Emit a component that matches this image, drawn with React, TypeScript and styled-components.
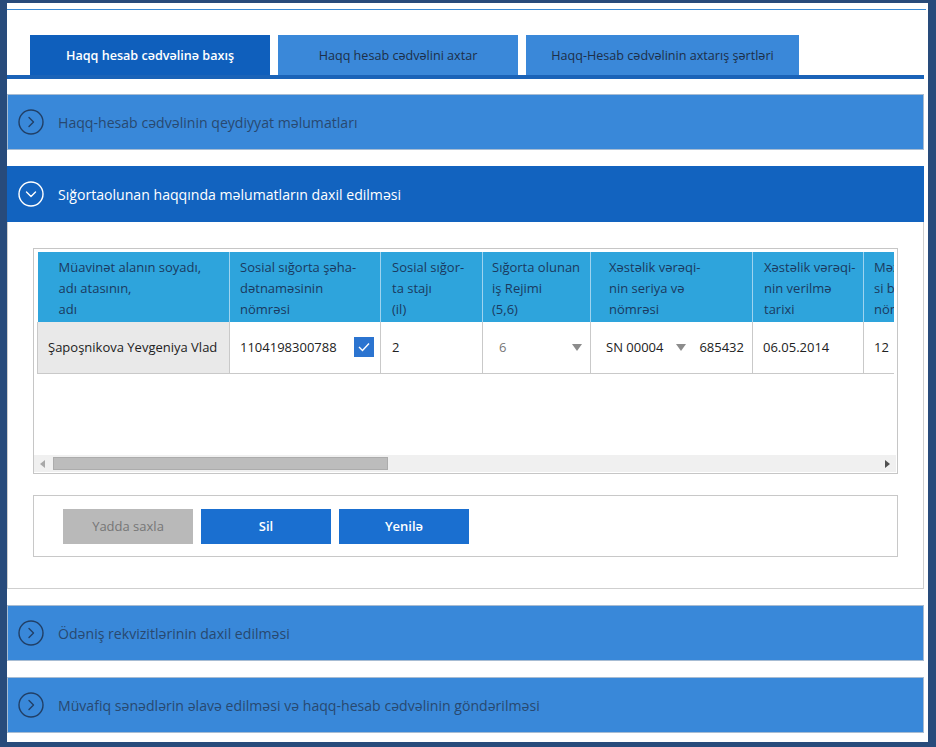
import React from "react";
import styled, { createGlobalStyle } from "styled-components";

const GlobalStyle = createGlobalStyle`
  html, body { margin: 0; padding: 0; background: #284b7b; }
  body { font-family: "Open Sans", "Noto Sans", "Liberation Sans", sans-serif; }
  * { box-sizing: border-box; }
`;

const Frame = styled.div`
  width: 936px;
  height: 747px;
  background: #ffffff;
  border-style: solid;
  border-color: #284b7b;
  border-width: 3px 8px 5px 7px;
  padding: 6px 4px 0 0;
  overflow: hidden;
`;

const TopRule = styled.div`
  height: 1px;
  background: #3a8ad4;
  margin: 0 -2px 25px -1px;
`;

const TabBar = styled.div`
  display: flex;
  gap: 8px;
  padding-left: 23px;
  border-bottom: 4px solid #1a63b8;
`;

const Tab = styled.div<{ $active?: boolean; $w: number }>`
  width: ${(p) => p.$w}px;
  height: 40px;
  display: flex;
  align-items: center;
  justify-content: center;
  font-size: 12.6px;
  font-weight: ${(p) => (p.$active ? 600 : 400)};
  color: ${(p) => (p.$active ? "#ffffff" : "#1d2f48")};
  background: ${(p) => (p.$active ? "#0f5fbc" : "#3a88d9")};
`;

const Sections = styled.div`
  display: flex;
  flex-direction: column;
  gap: 16px;
  padding-top: 15px;
`;

const Section = styled.section`
  display: flex;
  flex-direction: column;
`;

const SectionHeader = styled.div<{ $open?: boolean }>`
  height: 56px;
  display: flex;
  align-items: center;
  gap: 14px;
  padding-left: 10px;
  border: 1px solid ${(p) => (p.$open ? "#1263bf" : "#a7bcd3")};
  background: ${(p) => (p.$open ? "#1263bf" : "#3988d9")};
  color: ${(p) => (p.$open ? "#ffffff" : "#284870")};
  font-size: 14.1px;
`;

const ToggleIcon = styled.svg`
  flex: none;
  width: 26px;
  height: 26px;
`;

const Panel = styled.div`
  border: 1px solid #cfcfcf;
  border-top: none;
  padding: 26px 25px 31px 25px;
  display: flex;
  flex-direction: column;
  gap: 21px;
`;

const TableBox = styled.div`
  height: 226px;
  border: 1px solid #c6c6c6;
  padding: 3px 0 1px 0;
  display: flex;
  flex-direction: column;
`;

const Viewport = styled.div`
  flex: 1;
  margin: 0 3px;
  overflow: hidden;
`;

const Grid = styled.table`
  border-collapse: collapse;
  table-layout: fixed;
  width: 1000px;
  font-size: 13px;
`;

const HeadCell = styled.th<{ $pl: number }>`
  height: 70px;
  padding: 2px 4px 0 ${(p) => p.$pl}px;
  background: #2ea4dc;
  color: #1b3a60;
  font-weight: 400;
  text-align: left;
  vertical-align: middle;
  line-height: 21px;
  border-left: 1px solid #9ed3ef;
  white-space: nowrap;
  overflow: hidden;
  &:first-child { border-left: none; }
`;

const Cell = styled.td<{ $pl: number; $shade?: boolean; $muted?: boolean }>`
  height: 51px;
  padding: 0 8px 0 ${(p) => p.$pl}px;
  background: ${(p) => (p.$shade ? "#e9e9e9" : "#ffffff")};
  color: ${(p) => (p.$muted ? "#777777" : "#222222")};
  border: 1px solid #c9c9c9;
  border-top: none;
  white-space: nowrap;
  overflow: hidden;
`;

const CellRow = styled.div`
  display: flex;
  align-items: center;
  justify-content: space-between;
`;

const Check = styled.span`
  width: 20px;
  height: 20px;
  background: #2b74d0;
  display: inline-flex;
  align-items: center;
  justify-content: center;
  margin-right: -2px;
`;

const Caret = styled.svg`
  flex: none;
  width: 10px;
  height: 7px;
`;

const Scrollbar = styled.div`
  height: 17px;
  margin: 0 1px 0 0;
  background: #f0f0f0;
  display: flex;
  align-items: center;
`;

const ScrollArrow = styled.div`
  width: 17px;
  height: 17px;
  display: flex;
  align-items: center;
  justify-content: center;
  flex: none;
`;

const Thumb = styled.div<{ $w: number }>`
  width: ${(p) => p.$w}px;
  height: 13px;
  background: #bcbcbc;
  border: 1px solid #acacac;
  margin-left: 2px;
`;

const Spacer = styled.div`
  flex: 1;
`;

const ButtonBox = styled.div`
  height: 62px;
  border: 1px solid #c8c8c8;
  display: flex;
  align-items: center;
  gap: 8px;
  padding-left: 29px;
`;

const Button = styled.button<{ $variant: "disabled" | "primary" }>`
  width: 130px;
  height: 35px;
  border: none;
  font-family: inherit;
  font-size: 13px;
  font-weight: ${(p) => (p.$variant === "primary" ? 600 : 400)};
  background: ${(p) => (p.$variant === "primary" ? "#1a6fd0" : "#b9b9b9")};
  color: ${(p) => (p.$variant === "primary" ? "#ffffff" : "#767676")};
`;

const Chevron = ({ open }: { open?: boolean }) => (
  <ToggleIcon viewBox="0 0 26 26" fill="none" stroke={open ? "#ffffff" : "#213f66"} strokeWidth="1.4">
    <circle cx="13" cy="13" r="12" />
    {open ? (
      <path d="M8.5 11 L13 15.5 L17.5 11" strokeLinecap="round" strokeLinejoin="round" />
    ) : (
      <path d="M11 8.5 L15.5 13 L11 17.5" strokeLinecap="round" strokeLinejoin="round" />
    )}
  </ToggleIcon>
);

const DownCaret = () => (
  <Caret viewBox="0 0 10 7">
    <path d="M0 0 H10 L5 7 Z" fill="#8c8c8c" />
  </Caret>
);

const columns = [
  { w: 192, hp: 21, head: ["Müavinət alanın soyadı,", "adı atasının,", "adı"] },
  { w: 151, hp: 10, head: ["Sosial sığorta şəha-", "dətnaməsinin", "nömrəsi"] },
  { w: 102, hp: 11, head: ["Sosial sığor-", "ta stajı", "(il)"] },
  { w: 108, hp: 9, head: ["Sığorta olunan", "iş Rejimi", "(5,6)"] },
  { w: 162, hp: 18, head: ["Xəstəlik vərəqi-", "nin seriya və", "nömrəsi"] },
  { w: 111, hp: 11, head: ["Xəstəlik vərəqi-", "nin verilmə", "tarixi"] },
  { w: 174, hp: 10, head: ["Məzuniyyət vərəqə-", "si barədə əmrin", "nömrəsi"] },
];

const closedSections = {
  top: "Haqq-hesab cədvəlinin qeydiyyat məlumatları",
  pay: "Ödəniş rekvizitlərinin daxil edilməsi",
  docs: "Müvafiq sənədlərin əlavə edilməsi və haqq-hesab cədvəlinin göndərilməsi",
};

export default function App() {
  return (
    <>
      <GlobalStyle />
      <Frame>
        <TopRule />
        <TabBar>
          <Tab $active $w={240}>Haqq hesab cədvəlinə baxış</Tab>
          <Tab $w={240}>Haqq hesab cədvəlini axtar</Tab>
          <Tab $w={273}>Haqq-Hesab cədvəlinin axtarış şərtləri</Tab>
        </TabBar>
        <Sections>
          <Section>
            <SectionHeader>
              <Chevron />
              <span>{closedSections.top}</span>
            </SectionHeader>
          </Section>
          <Section>
            <SectionHeader $open>
              <Chevron open />
              <span>Sığortaolunan haqqında məlumatların daxil edilməsi</span>
            </SectionHeader>
            <Panel>
              <TableBox>
                <Viewport>
                  <Grid>
                    <colgroup>
                      {columns.map((c, i) => (
                        <col key={i} style={{ width: c.w }} />
                      ))}
                    </colgroup>
                    <thead>
                      <tr>
                        {columns.map((c, i) => (
                          <HeadCell key={i} $pl={c.hp}>
                            {c.head.map((l, j) => (
                              <React.Fragment key={j}>
                                {l}
                                {j < c.head.length - 1 && <br />}
                              </React.Fragment>
                            ))}
                          </HeadCell>
                        ))}
                      </tr>
                    </thead>
                    <tbody>
                      <tr>
                        <Cell $pl={10} $shade>Şapoşnikova Yevgeniya Vlad</Cell>
                        <Cell $pl={10}>
                          <CellRow>
                            <span>1104198300788</span>
                            <Check>
                              <svg width="12" height="10" viewBox="0 0 12 10" fill="none" stroke="#ffffff" strokeWidth="1.4">
                                <path d="M1 5 L4.5 8.5 L11 1.5" />
                              </svg>
                            </Check>
                          </CellRow>
                        </Cell>
                        <Cell $pl={11}>2</Cell>
                        <Cell $pl={16} $muted>
                          <CellRow>
                            <span>6</span>
                            <DownCaret />
                          </CellRow>
                        </Cell>
                        <Cell $pl={15}>
                          <CellRow>
                            <span>SN 00004</span>
                            <DownCaret />
                            <span>685432</span>
                          </CellRow>
                        </Cell>
                        <Cell $pl={10}>06.05.2014</Cell>
                        <Cell $pl={10}>12</Cell>
                      </tr>
                    </tbody>
                  </Grid>
                </Viewport>
                <Scrollbar>
                  <ScrollArrow>
                    <svg width="5" height="8" viewBox="0 0 5 8">
                      <path d="M5 0 V8 L0 4 Z" fill="#a8a8a8" />
                    </svg>
                  </ScrollArrow>
                  <Thumb $w={335} />
                  <Spacer />
                  <ScrollArrow>
                    <svg width="5" height="8" viewBox="0 0 5 8">
                      <path d="M0 0 V8 L5 4 Z" fill="#505050" />
                    </svg>
                  </ScrollArrow>
                </Scrollbar>
              </TableBox>
              <ButtonBox>
                <Button $variant="disabled">Yadda saxla</Button>
                <Button $variant="primary">Sil</Button>
                <Button $variant="primary">Yenilə</Button>
              </ButtonBox>
            </Panel>
          </Section>
          <Section>
            <SectionHeader>
              <Chevron />
              <span>{closedSections.pay}</span>
            </SectionHeader>
          </Section>
          <Section>
            <SectionHeader>
              <Chevron />
              <span>{closedSections.docs}</span>
            </SectionHeader>
          </Section>
        </Sections>
      </Frame>
    </>
  );
}
